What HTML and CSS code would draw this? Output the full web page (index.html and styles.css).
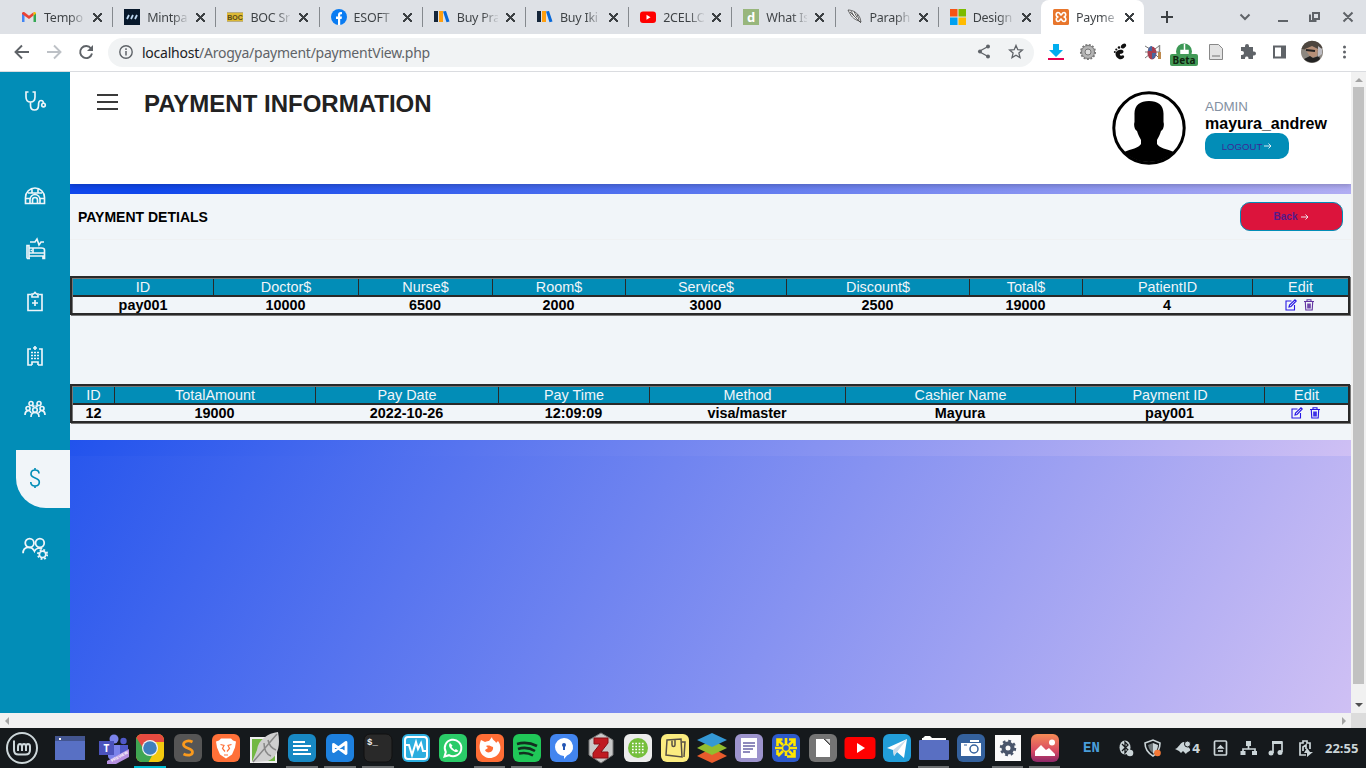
FILE: index.html
```html
<!DOCTYPE html>
<html lang="en">
<head>
<meta charset="utf-8">
<title>Payment</title>
<link rel="stylesheet" href="styles.css">
</head>
<body>
<div class="screen">
<div class="tabs">
  <div class="tab"><svg class="fav" viewBox="0 0 16 16"><path d="M1 13V4l2.500.500V13z" fill="#4285f4"/><path d="M12.500 13V4.500L15 4v9z" fill="#34a853"/><path d="M1 4.500C1 3 2.500 2.500 3.500 3.200L8 6.700v3.200L1 5z" fill="#ea4335"/><path d="M8 6.700l4.500-3.500L12.500 6.500 8 9.900z" fill="#ea4335"/><path d="M12.500 3.200C13.500 2.500 15 3 15 4.500L12.500 6.800z" fill="#fbbc04"/></svg><span class="name">Tempo</span><i class="close"></i></div>
  <div class="tab"><svg class="fav" viewBox="0 0 16 16"><path d="M0 0h16v16H0z" fill="#07182b"/><path d="M3 10l2-4M7 10l2-4M11 10l2-4" stroke="#bcd8f2" stroke-width="1.800"/></svg><span class="name">Mintpa</span><i class="close"></i></div>
  <div class="tab"><svg class="fav" viewBox="0 0 16 16"><path d="M0 3h16v10H0z" fill="#dcb936"/><path d="M0 3.500h16M0 12.500h16" stroke="#b9ad84"/><text x="8" y="10.500" class="fav-boc">BOC</text></svg><span class="name">BOC Sr</span><i class="close"></i></div>
  <div class="tab"><svg class="fav" viewBox="0 0 16 16"><circle cx="8" cy="8" r="8" fill="#0a7cf2"/><path d="M7 16v-6H5V7.500h2V6c0-2.200 1.300-3.200 4-2.800v2C9.500 5 9.200 5.400 9.200 6.500v1H11L10.600 10H9.200v6z" fill="#fff"/></svg><span class="name">ESOFT</span><i class="close"></i></div>
  <div class="tab"><svg class="fav" viewBox="0 0 16 16"><path d="M0 2h4v11H0z" fill="#15263a"/><path d="M5 2h4v11H5z" fill="#ff9f10"/><path d="M9 2.500L12 2l3.500 10.500-3 .8z" fill="#0868d8"/></svg><span class="name">Buy Pra</span><i class="close"></i></div>
  <div class="tab"><svg class="fav" viewBox="0 0 16 16"><path d="M0 2h4v11H0z" fill="#15263a"/><path d="M5 2h4v11H5z" fill="#ff9f10"/><path d="M9 2.500L12 2l3.500 10.500-3 .8z" fill="#0868d8"/></svg><span class="name">Buy Iki</span><i class="close"></i></div>
  <div class="tab"><svg class="fav" viewBox="0 0 16 16"><rect y="2.500" width="16" height="11.500" rx="3" fill="#f00"/><path d="M6.500 5.800v5l4-2.500z" fill="#fff"/></svg><span class="name">2CELLO</span><i class="close"></i></div>
  <div class="tab"><svg class="fav" viewBox="0 0 16 16"><path d="M0 0h16v16H0z" fill="#98b67c"/><text x="8" y="12.500" class="fav-d">d</text></svg><span class="name">What Is</span><i class="close"></i></div>
  <div class="tab"><svg class="fav" viewBox="0 0 16 16"><path d="M1 1c5 0 10 3 12 8l1 4-2-1C6 10 4 7 1 1zM3 3l11 11M4 2l3 5M7 2.500l3 6M10 5l2 6" fill="#f5f5f5" stroke="#444" stroke-width=".8"/></svg><span class="name">Paraph</span><i class="close"></i></div>
  <div class="tab last"><svg class="fav" viewBox="0 0 16 16"><path d="M0 0h7.500v7.500H0z" fill="#f65314"/><path d="M8.500 0H16v7.500H8.500z" fill="#7cbb00"/><path d="M0 8.500h7.500V16H0z" fill="#00a1f1"/><path d="M8.500 8.500H16V16H8.500z" fill="#ffbb00"/></svg><span class="name">Design</span><i class="close"></i></div>
  <div class="tab active"><svg class="fav" viewBox="0 0 16 16"><rect width="16" height="16" rx="1.500" fill="#e8762c"/><path d="M5.500 8C2.500 8 2.500 3.500 5 3.500S7 6 8 6s.8-2.500 3-2.500S13.500 8 10.500 8c3 0 3 4.500.500 4.500S9 10 8 10s-.8 2.500-3 2.500S2.500 8 5.500 8z" fill="none" stroke="#fff" stroke-width="1.600"/></svg><span class="name">Payme</span><i class="close"></i></div>
  <svg class="winctl" viewBox="0 0 221 34"><g fill="none" stroke="#3c4043" stroke-width="2"><path d="M17 17h12M23 11v12"/><path d="M96.500 14.500L101 19l4.500-4.500" stroke="#5f6368"/><g stroke="#5f6368"><path d="M134 21h10M169 13h6v6h-6zM166 14.500v6.500h6.500M199.500 12.500l9 9M208.500 12.500l-9 9"/></g></g></svg>
</div>
<div class="toolbar">
  <svg class="nav" viewBox="0 0 108 36"><g fill="none" stroke="#5f6368" stroke-width="1.900"><path d="M29 17H16M22 10.500L15.500 17l6.500 6.500"/><path d="M47 17h13M54 10.500l6.500 6.500-6.500 6.500" stroke="#bdc1c6"/><path d="M91 13.500A6 6 0 1 0 92 18.500"/></g><path d="M93 10v6h-6z" fill="#5f6368"/></svg>
  <div class="address"><svg class="info" viewBox="0 0 16 16"><circle cx="8" cy="8" r="6.200" fill="none" stroke="#5f6368" stroke-width="1.400"/><path d="M8 7v4.500M8 4.300V6" stroke="#5f6368" stroke-width="1.500"/></svg><span class="url"><b>localhost</b>/Arogya/payment/paymentView.php</span>
    <svg class="addr-icons" viewBox="0 0 60 30"><g fill="none" stroke="#5f6368" stroke-width="1.300"><path d="M14 9.500l-9 5 9 5"/><path d="M42 8.500l1.800 4.200 4.600.4-3.500 3 1.100 4.500-4-2.400-4 2.400 1.100-4.500-3.500-3 4.600-.4z"/></g><g fill="#5f6368"><circle cx="14" cy="9.500" r="2"/><circle cx="6" cy="14.500" r="2"/><circle cx="14" cy="19.500" r="2"/></g></svg>
  </div>
  <svg class="ext" viewBox="0 0 332 36">
    <path d="M19 9h6v6h4l-7 7-7-7h4z" fill="#00aeef"/><path d="M14 24h16" stroke="#e5004f" stroke-width="2"/>
    <circle cx="54" cy="17" r="6.500" fill="#b4b4b4" stroke="#777"/><circle cx="54" cy="17" r="7.300" fill="none" stroke="#777" stroke-width="1.500" stroke-dasharray="2 1.500"/><circle cx="54" cy="17" r="3" fill="#ddd" stroke="#777"/>
    <g fill="#111"><ellipse cx="89.500" cy="11" rx="3" ry="2" transform="rotate(-35 89.500 11)"/><circle cx="85" cy="12.500" r="1.300"/><circle cx="82.300" cy="14.500" r="1.100"/><circle cx="80.800" cy="17" r="1"/><path d="M81.500 19c0-4.500 8-5.500 8-2.500s-4.500 1.500-3.500 3.500 3-1 4 1-3 4-5 3-3.500-3-3.500-5z"/></g>
    <path d="M111 11l5 3M111 17h14M111 23l5-4M125 11l-4 3M125 23l-4-4" stroke="#777"/><ellipse cx="118" cy="18" rx="4.500" ry="6.500" fill="#a63e50"/><path d="M118 11a4 5 0 0 0-4 5h4z" fill="#4767a0"/><path d="M118 18h4a4 6 0 0 1-4 6z" fill="#4767a0"/><path d="M125.500 10v8" stroke="#888" stroke-width="1.500"/><path d="M125.500 17v7" stroke="#bd894d" stroke-width="3"/>
    <circle cx="150" cy="16.500" r="8" fill="#3c9856"/><path d="M147 15.500h7v4h-7zM150.500 9v6" stroke="#fff" stroke-width="1.500" fill="#fff"/><rect x="136" y="19" width="28" height="12" rx="2" fill="#439a57"/><text x="150" y="29" class="beta">Beta</text>
    <path d="M175.500 9.500h9l4 4v11h-13z" fill="#e3e3e3" stroke="#888"/><path d="M178 20h8v2h-8z" fill="#aaa"/>
    <path d="M207 12h4v-1a2 2 0 0 1 4 0v1h4v4.500h1a2 2 0 0 1 0 4h-1V24h-4.500v-1a1.800 1.800 0 0 0-3.500 0v1H207v-4h1a1.800 1.800 0 0 0 0-4h-1z" fill="#5f6368"/>
    <path d="M240 11.500h11v11h-11z" fill="none" stroke="#5f6368" stroke-width="2"/><path d="M247 11h5v12h-5z" fill="#5f6368"/>
    <circle cx="278" cy="17" r="11" fill="#8c8780"/><path d="M267.500 14a11 11 0 0 1 21-1l-5 3-8-1z" fill="#4d463f"/><path d="M271 14l7-3 6 3-1 7-6 2z" fill="#b58f78"/><path d="M270 24l6-3 3 2 6-2 1 3a11 11 0 0 1-16 0z" fill="#222"/><path d="M272 15l9 1" stroke="#222" stroke-width="2"/><path d="M284 11l4 3v5l-4 3z" fill="#bdbcc2"/>
    <g fill="#5f6368"><circle cx="310.500" cy="12" r="1.500"/><circle cx="310.500" cy="17" r="1.500"/><circle cx="310.500" cy="22" r="1.500"/></g>
  </svg>
</div>
<div class="viewport">
  <nav class="side">
    <svg class="logo" viewBox="0 0 24 24"><path d="M5.500 3H3v5c0 3 1.500 5 4.500 5S12 11 12 8V3H9.500M7.500 13v3.500c0 6 8 6 8 0 0-3 .5-5 2.500-5s2.500 1.500 2.500 3"/><circle cx="20.500" cy="16" r="1.800"/></svg>
    <svg viewBox="0 0 24 24"><path d="M2.500 19.500v-6a9.500 9.500 0 0 1 19 0v6zM2.500 14.500h4M17.500 14.500h4M5 9h14M9 9V4.500M15 9V4.500M7 19v-3.500a5 5 0 0 1 10 0V19M9.500 19v-3a2.500 2.500 0 0 1 5 0v3"/></svg>
    <svg viewBox="0 0 24 24"><path d="M4 21.500V8.500h2v13M4 21.500h3M6 19h14v2.500h1.500V13c0-1.500-1-2-3-2H6M6 16h15M10 11v5M7 5h5l2-3 2 6 2-3h3M7.500 13.500h1.500"/></svg>
    <svg viewBox="0 0 24 24"><path d="M8 4.500H5v16h14v-16h-3M9 4h1.500l1.500-1.500L13.500 4H15v3H9zM12 10v6M9 13h6"/></svg>
    <svg viewBox="0 0 24 24"><path d="M8 5H5v16h4M16 5h3v16h-4M9 21v-3h6v3M12 2v4M10 4h4"/><path d="M8 8.500h8M8 11.500h8M8 14.500h8" stroke-dasharray="2 1"/></svg>
    <svg viewBox="0 0 24 24"><circle cx="8" cy="6.500" r="2"/><circle cx="16" cy="6.500" r="2"/><circle cx="5" cy="11.500" r="2"/><circle cx="19" cy="11.500" r="2"/><circle cx="12" cy="13" r="2.300"/><path d="M2 18c0-5 5-6 6-2M16 16c1-4 6-3 6 2M8 20c0-6 8-6 8 0M9.500 10l2-1.500M14.500 10l-2-1.500"/></svg>
    <div class="current"><svg viewBox="0 0 24 24"><path d="M16 7.500C16 5 14.500 4 12 4S8 5.500 8 8c0 5 8.300 3 8.300 8 0 2.500-1.800 4-4.300 4s-4.200-1.500-4.200-4M12 2v2M12 20v2"/></svg></div>
    <svg class="users" viewBox="0 0 24 24"><circle cx="7" cy="6.500" r="4"/><circle cx="16.500" cy="6.500" r="4"/><path d="M1 16c0-7 8-7 10.500-2 1.500-3 5-3.500 7-2"/><circle cx="19" cy="17" r="3"/><circle cx="19" cy="17" r="4.300" stroke-dasharray="1.700 1.700" stroke-width="1.700"/></svg>
  </nav>
  <div class="page">
    <header class="head">
      <div class="burger"><i></i><i></i><i></i></div>
      <h1>PAYMENT INFORMATION</h1>
      <div class="user">
        <svg class="avatar" viewBox="0 0 74 74"><circle cx="37" cy="37" r="35.200" fill="#fff" stroke="#000" stroke-width="3"/><path d="M37 10c-9 0-15 4-14.500 14v7c-1 3 0 8 2.500 9 1 4 3 7 4 9v4c-2 4-10 5-17 8a36 36 0 0 0 50 0c-7-3-15-4-17-8v-4c1-2 3-5 4-9 2.500-1 3.500-6 2.500-9v-7C52 14 46 10 37 10z"/></svg>
        <div class="who"><small>ADMIN</small><strong>mayura_andrew</strong><a class="logout">LOGOUT<svg viewBox="0 0 8 8"><path d="M0 4h7M4.500 1.500L7 4 4.500 6.500"/></svg></a></div>
      </div>
    </header>
    <main>
      <section class="card">
        <div class="cardhead"><h2>PAYMENT DETIALS</h2><a class="back">Back<svg viewBox="0 0 8 8"><path d="M0 4h7M4.500 1.500L7 4 4.500 6.500"/></svg></a></div>
        <div class="tbl t1">
          <div class="row th"><span>ID</span><span>Doctor$</span><span>Nurse$</span><span>Room$</span><span>Service$</span><span>Discount$</span><span>Total$</span><span>PatientID</span><span>Edit</span></div>
          <div class="row td"><span>pay001</span><span>10000</span><span>6500</span><span>2000</span><span>3000</span><span>2500</span><span>19000</span><span>4</span><span class="acts"><svg viewBox="0 0 12 12"><path d="M6.500 2H1v9h8.500V6M4 8l.5-2L10 .8 11.300 2 6 7.500z"/></svg><svg class="visited" viewBox="0 0 12 12"><path d="M1 2.500h10M4 2V.8h4V2M2.300 3l.5 8h6.400l.5-8M4.800 4.500v5M6 4.500v5M7.200 4.500v5"/></svg></span></div>
        </div>
        <div class="tbl t2">
          <div class="row th"><span>ID</span><span>TotalAmount</span><span>Pay Date</span><span>Pay Time</span><span>Method</span><span>Cashier Name</span><span>Payment ID</span><span>Edit</span></div>
          <div class="row td"><span>12</span><span>19000</span><span>2022-10-26</span><span>12:09:09</span><span>visa/master</span><span>Mayura</span><span>pay001</span><span class="acts"><svg viewBox="0 0 12 12"><path d="M6.500 2H1v9h8.500V6M4 8l.5-2L10 .8 11.300 2 6 7.500z"/></svg><svg viewBox="0 0 12 12"><path d="M1 2.500h10M4 2V.8h4V2M2.300 3l.5 8h6.400l.5-8M4.800 4.500v5M6 4.500v5M7.200 4.500v5"/></svg></span></div>
        </div>
      </section>
    </main>
  </div>
  <div class="vscroll"><i class="up"></i><i class="thumb"></i><i class="down"></i></div>
</div>
<div class="hscroll"><i class="left"></i><i class="right"></i><b></b></div>
<footer class="taskbar">
  <div class="slot mint"><svg viewBox="0 0 32 32"><g fill="none" stroke="#cdd7da" stroke-width="2"><circle cx="16" cy="16" r="15"/><path d="M8 8.500V18c0 3 2 4.500 4.500 4.500h7c3 0 4.500-1.500 4.500-4.500v-3.500c0-3.500-4-3.500-4 0V19M20 15c0-4-4-4-4 0v4M16 15c0-4-4-4-4 0v4" stroke-width="2"/></g></svg></div>
  <div class="slot wins"><svg viewBox="0 0 32 32"><path d="M1 4h30v24H1z" fill="#5870c4"/><path d="M1 4h30v5H1z" fill="#43558f"/><path d="M5 6h2v2H5z" fill="#fff"/></svg></div>
  <div class="slot teams"><svg viewBox="0 0 32 32"><circle cx="16" cy="7" r="4.500" fill="#7b83eb"/><circle cx="25.500" cy="9" r="3.200" fill="#5059c9"/><path d="M20 13h10v9c0 5-8 7-10 2z" fill="#5059c9"/><path d="M10 13h12v11c-2 6-12 5-12 0z" fill="#7b83eb"/><path d="M1 9h15v14H1z" fill="#4b53bc"/><text x="8.500" y="20" class="ic-t">T</text><path d="M9 29l22-12v8l-13 7H9z" fill="#b490e0"/><text x="14" y="30" class="ic-prev" transform="rotate(-28 14 30)">PREVIEW</text></svg></div>
  <div class="slot run now"><svg viewBox="0 0 32 32"><clipPath id="tile"><rect x="2" y="2" width="28" height="28" rx="6"/></clipPath><g clip-path="url(#tile)"><path d="M2 2h28v28H2z" fill="#f2c90f"/><path d="M2 0h28v10H16l-6 10L2 7z" fill="#e64a40"/><path d="M2 5l10 16 7 1-5 9H2z" fill="#3fa652"/></g><circle cx="16" cy="16" r="8" fill="#f2f2f2"/><circle cx="16" cy="16" r="6.800" fill="#3f7fbd"/></svg></div>
  <div class="slot"><svg viewBox="0 0 32 32"><rect x="2" y="2" width="28" height="28" rx="6" fill="#555"/><path d="M20.500 10c-4-2-9-1-9 2.500 0 4.500 9 3 9 7.500 0 3.500-5 4-9 2" fill="none" stroke="#fb9a1c" stroke-width="2.700"/></svg></div>
  <div class="slot"><svg viewBox="0 0 32 32"><rect x="2" y="2" width="28" height="28" rx="6" fill="#ff7038"/><path d="M11 6.500h10l2 2 3 1-1 6-3 7-6 4-6-4-3-7-1-6 3-1z" fill="#fff"/><path d="M10.500 12.500l3.500 1-1.500 3 2.500 3M21.500 12.500l-3.500 1 1.500 3-2.500 3M14 23h4" fill="none" stroke="#ff7038" stroke-width="1.200"/></svg></div>
  <div class="slot"><svg viewBox="0 0 32 32"><path d="M3 6h25v24H3z" fill="#72b843" stroke="#eee" stroke-width="2"/><path d="M30 0C20 1 10 8 9 18L4 30l16-1c9-3 13-14 10-29z" fill="#cfcfcf"/><path d="M29 2L5 30M16 11c0 6 2 11 7 13M20 8c1 5 3 8 8 10" fill="none" stroke="#888" stroke-width="1.500"/></svg></div>
  <div class="slot run"><svg viewBox="0 0 32 32"><rect x="2" y="2" width="28" height="28" rx="6" fill="#1888c3"/><path d="M7 10h12M7 14h18M7 18h15M7 22h18" stroke="#fff" stroke-width="2"/></svg></div>
  <div class="slot run"><svg viewBox="0 0 32 32"><rect x="2" y="2" width="28" height="28" rx="6" fill="#1d80de"/><path d="M9.500 12.500L22 21.500v-11L9.500 19.500z" fill="none" stroke="#fff" stroke-width="2.800" stroke-linejoin="round"/></svg></div>
  <div class="slot run"><svg viewBox="0 0 32 32"><rect x="2" y="2" width="28" height="28" rx="6" fill="#292929" stroke="#111"/><text x="5" y="13" class="ic-sh">$_</text></svg></div>
  <div class="slot n"><svg viewBox="0 0 32 32"><rect x="2" y="2" width="28" height="28" rx="6" fill="#2caedf"/><rect x="5" y="5" width="22" height="22" rx="3" fill="none" stroke="#fff" stroke-width="2"/><path d="M5 13h4l3 10 4-13 2 7 3-6 2 8h4" fill="none" stroke="#fff" stroke-width="2"/></svg></div>
  <div class="slot n"><svg viewBox="0 0 32 32"><rect x="2" y="2" width="28" height="28" rx="6" fill="#2acb68"/><path d="M7.500 24.500l1.300-4.500a8.300 8.300 0 1 1 3.200 3.200z" fill="none" stroke="#fff" stroke-width="2"/><path d="M13 11c-2 2-.5 5 2 7s5 3 6.500 1l-2.500-2-1.500 1-3-3 1-1.500z" fill="#fff"/></svg></div>
  <div class="slot n run"><svg viewBox="0 0 32 32"><rect x="2" y="2" width="28" height="28" rx="6" fill="#ff6d35"/><path d="M7 8l4 2c2-1 3-1 4-1l3-4c0 3 4 4 4 6l2-2c6 8 0 17-8 17S3 18 7 8z" fill="#fff"/><path d="M12 14c3-1 4 0 7 1 1 6-7 7-8 3l3-2z" fill="#ff6d35"/></svg></div>
  <div class="slot n run"><svg viewBox="0 0 32 32"><rect x="2" y="2" width="28" height="28" rx="6" fill="#20c758"/><path d="M6 12c7-2 14-1 20 2M7 17c6-2 12-1 17 2M8 21.500c5-1 9-1 14 2" fill="none" stroke="#132f20" stroke-width="2.600"/></svg></div>
  <div class="slot n"><svg viewBox="0 0 32 32"><rect x="2" y="2" width="28" height="28" rx="6" fill="#4285ef"/><path d="M16 6a9 9 0 0 1 3 17.500L16 27v-3A9 9 0 0 1 16 6z" fill="#fff"/><circle cx="16" cy="13" r="2" fill="#2456b4"/><path d="M15 14h2v4h-2z" fill="#2456b4"/></svg></div>
  <div class="slot n"><svg viewBox="0 0 32 32"><path d="M16 1l12 7v15l-12 8-12-8V8z" fill="#c9c9c9" stroke="#777"/><path d="M9 6h14v5l-7 9h7v6H8v-5l7-9H9z" fill="#c01b22" stroke="#881116"/></svg></div>
  <div class="slot n"><svg viewBox="0 0 32 32"><rect x="2" y="2" width="28" height="28" rx="6" fill="#ececec"/><circle cx="16" cy="16" r="10" fill="#75bf3c"/><path d="M10 11.500h12M10 14.500h12M10 17.500h12M10 20.500h12" stroke="#fff" stroke-width="1.700" stroke-dasharray="1.700 1.600"/></svg></div>
  <div class="slot n"><svg viewBox="0 0 32 32"><rect x="2" y="2" width="28" height="28" rx="6" fill="#fbec80"/><path d="M8 8l14-1 1 18-16-2zM13 8v5c0 2 3 2 3 0V7M23 10h3l-1 15" fill="none" stroke="#575044" stroke-width="1.500"/></svg></div>
  <div class="slot n"><svg viewBox="0 0 32 32"><path d="M1 24l15-8 15 8-15 7z" fill="#e85b2c"/><path d="M1 16l15-8 15 8-15 7z" fill="#91bd2f"/><path d="M1 8l15-7 15 7-15 7z" fill="#3498d5"/></svg></div>
  <div class="slot n"><svg viewBox="0 0 32 32"><rect x="2" y="2" width="28" height="28" rx="6" fill="#9d94cd"/><path d="M8 6h16v20H8z" fill="#fff"/><path d="M10 11h12M10 14h12M10 17h10M10 20h7" stroke="#6964a6" stroke-width="1.300"/></svg></div>
  <div class="slot n"><svg viewBox="0 0 32 32"><rect x="2" y="2" width="28" height="28" rx="6" fill="#2d5acb"/><path d="M8 8l5 5M24 8l-5 5M13 19l-5 5M19 19l5 5M7.500 14V7.500h5M19 7.500h5.500V14M7.500 18v5M17 24.500h7.500V18M5 16h7M20 16h7M16 6v6M16 20v4" fill="none" stroke="#ffe500" stroke-width="2.600"/><circle cx="16" cy="16" r="3.500" fill="#2d5acb" stroke="#ffe500" stroke-width="1.500"/></svg></div>
  <div class="slot n"><svg viewBox="0 0 32 32"><rect x="2" y="2" width="28" height="28" rx="6" fill="#747474"/><path d="M9 7h8l6 6v12H9z" fill="#fff"/><path d="M17 7l6 6" stroke="#444"/><path d="M18.500 7H23v4.500z" fill="#ddd"/></svg></div>
  <div class="slot n"><svg viewBox="0 0 32 32"><rect x=".5" y="5" width="31" height="22" rx="4" fill="#f00"/><path d="M13 11v10l8-5z" fill="#fff"/></svg></div>
  <div class="slot n"><svg viewBox="0 0 32 32"><rect x="2" y="2" width="28" height="28" rx="6" fill="#229ed9"/><path d="M6 16L26 7l-3 19-7-6-3 4-1-6z" fill="#fff"/><path d="M12 18L26 7 16 20l-3 4z" fill="#c8dcea"/></svg></div>
  <div class="slot n run"><svg viewBox="0 0 32 32"><path d="M4 12V6h1l2-2h5l2 2h14v7z" fill="#fff"/><rect x="1" y="8" width="30" height="20" rx="1" fill="#596fc2"/></svg></div>
  <div class="slot n"><svg viewBox="0 0 32 32"><rect x="2" y="2" width="28" height="28" rx="6" fill="#34619d"/><path d="M6 11h20v13H6zM15 8h9v2h-9z" fill="#fff"/><circle cx="19" cy="17" r="4" fill="#fff" stroke="#34619d" stroke-width="1.500"/><path d="M9 13h3" stroke="#34619d"/></svg></div>
  <div class="slot n run"><svg viewBox="0 0 32 32"><path d="M3 3h26v26H3z" fill="#fafafa"/><circle cx="16" cy="16" r="4.500" fill="none" stroke="#49556a" stroke-width="4"/><circle cx="16" cy="16" r="7" fill="none" stroke="#49556a" stroke-width="2.500" stroke-dasharray="2.750"/></svg></div>
  <div class="slot n run"><svg viewBox="0 0 32 32"><defs><linearGradient id="photo" x2="0" y2="1"><stop stop-color="#f58b55"/><stop offset=".6" stop-color="#d84a64"/><stop offset="1" stop-color="#8c2768"/></linearGradient></defs><rect x="2" y="2" width="28" height="28" rx="6" fill="url(#photo)"/><path d="M6 24v-5l6-6 5 5 3-2 6 6v2z" fill="#fff"/><circle cx="23" cy="10.500" r="3" fill="#fff"/></svg></div>
  <span class="lang">EN</span>
  <svg class="tray" viewBox="0 0 206 24"><g fill="#cbd5d8" stroke="none"><ellipse cx="8" cy="11.500" rx="5.500" ry="7"/><path d="M5 8l6 6-3 3V6l3 3-6 6" fill="none" stroke="#15191c" stroke-width="1.300"/><circle cx="13" cy="17" r="3.300"/>
    <path d="M28 7l8-3 7 3c0 6-2 10-7 13-5-3-8-7-8-13z" fill="#15191c" stroke="#cbd5d8" stroke-width="1.600"/><path d="M36 7l5 2c0 4-2 7-5 9z" /><path d="M31 9l5-2v10c-3-2-4-4-5-8z" fill="#6d7679"/><circle cx="40.500" cy="17" r="3.300" fill="#f57937"/>
    <path d="M58 13c4-1 5-7 9-7l6 7c1 3-3 2-4 5l-3-3-2 2-2-2z"/><circle cx="70.500" cy="8" r="3" stroke="#15191c"/></g><text x="75" y="17" class="num">4</text>
    <g fill="none" stroke="#cbd5d8" stroke-width="1.700"><rect x="97.500" y="5" width="12" height="14" rx="1"/><path d="M101 15h5"/><path d="M101.500 12l2-2 2 2z"/><path d="M131.500 9v4M126 17v-4h12v4"/><path d="M156 17V6h9v10"/><path d="M189 19h-6V7h3V5h4v2h3v6M186 15v-4l3-2v4"/></g><g fill="#cbd5d8"><path d="M129 5h5v5h-5zM123.500 15h5v4h-5zM135 15h5v4h-5zM155 5h10v3h-10z"/><circle cx="154" cy="17" r="2.500"/><circle cx="163" cy="16.500" r="2.500"/><path d="M190 12l-3 5h3v4l6-5h-3z"/></g></svg>
  <span class="clock">22:55</span>
</footer>
</div>
</body>
</html>
```
FILE: styles.css
```css
* { box-sizing: border-box; }
body { margin: 0; font-family: "Liberation Sans", Arial, sans-serif; color: #000; }
svg { display: block; flex: none; }
.screen { width: 1366px; height: 768px; overflow: hidden; display: flex; flex-direction: column; }

/* browser chrome */
.tabs { height: 34px; flex: none; display: flex; background: #dee1e6; padding-left: 9px; }
.tab { width: 103.2px; flex: none; display: flex; align-items: center; padding-left: 12px; position: relative; }
.tab::after { content: ""; position: absolute; right: -1px; top: 7px; width: 1px; height: 20px; background: #85898e; }
.tab.last::after, .tab.active::after { display: none; }
.tab.active { background: #fff; border-radius: 8px 8px 0 0; }
.fav { width: 16px; height: 16px; }
.fav-boc { font: bold 7px "Liberation Sans", sans-serif; fill: #5b4a1a; text-anchor: middle; }
.fav-d { font: bold 13px "Noto Sans", sans-serif; fill: #fff; text-anchor: middle; }
.name { width: 41px; margin-left: 7px; white-space: nowrap; font: 12.500px "Noto Sans", sans-serif; letter-spacing: -.25px; color: transparent; background: linear-gradient(90deg, #3c4043 62%, #c9ccd1 98%) text; }
.close { width: 9px; height: 9px; margin-left: 8px; background: linear-gradient(45deg, transparent 43%, #3c4043 43%, #3c4043 57%, transparent 57%), linear-gradient(-45deg, transparent 43%, #3c4043 43%, #3c4043 57%, transparent 57%); }
.winctl { width: 221px; height: 34px; }
.toolbar { height: 38px; flex: none; display: flex; align-items: center; background: #fff; border-bottom: 1px solid #dadce0; }
.nav { width: 108px; height: 36px; }
.address { width: 926px; height: 29px; margin-top: -1px; border-radius: 15px; background: #f1f3f4; display: flex; align-items: center; padding-left: 10px; }
.info { width: 16px; height: 16px; }
.url { margin-left: 8px; flex: 1; font: 14px "Noto Sans", sans-serif; letter-spacing: -.24px; color: #5f6368; white-space: nowrap; }
.url b { font-weight: 400; color: #202124; }
.addr-icons { width: 60px; height: 30px; }
.ext { width: 332px; height: 36px; }
.beta { font: bold 10px "Noto Sans", sans-serif; text-anchor: middle; fill: #10240f; }

/* web page */
.viewport { height: 641px; flex: none; display: flex; }
.side { width: 70px; flex: none; background: #028db7; display: flex; flex-direction: column; align-items: center; padding-top: 17px; }
.side svg { width: 24px; height: 24px; margin-bottom: 29.200px; fill: none; stroke: #eef5f9; stroke-width: 1.650; }
.side .logo { margin-bottom: 71px; }
.current { width: 54px; height: 58px; align-self: flex-end; background: #f1f5f9; border-bottom-left-radius: 30px; padding: 16px 0 0 7px; }
.side .current svg { stroke: #028db7; }
.side .users { margin-top: 28px; width: 26px; height: 26px; }
.page { width: 1281px; flex: none; background: linear-gradient(120deg, #0f47ec 0%, #cfc0f4 100%); }
.head { height: 112px; background: #fff; display: flex; padding: 19px 24px 0 27px; position: relative; box-shadow: 0 2px 5px rgba(0,0,0,.2); clip-path: inset(0 0 -10px 0); }
.burger { width: 21px; height: 16px; margin-top: 3px; display: flex; flex-direction: column; justify-content: space-between; }
.burger i { height: 2px; background: #3a3a3a; }
h1 { margin: -1px 0 0 26px; font-size: 24px; line-height: 28px; color: #222; }
.user { margin-left: auto; display: flex; gap: 19px; }
.avatar { width: 74px; height: 74px; margin-top: -.5px; }
.who { width: 122px; padding-top: 7px; display: flex; flex-direction: column; }
.who small { font-size: 13.330px; line-height: 18px; color: #8390a2; }
.who strong { font-size: 16px; line-height: 16px; height: 17px; white-space: nowrap; }
.logout { width: 84px; height: 26px; border-radius: 10px; background: #028db7; color: #3b2a96; font-size: 9.600px; display: flex; align-items: center; justify-content: center; gap: 2px; }
.logout svg, .back svg { width: 8px; height: 8px; fill: none; stroke: #eef5f9; stroke-width: .900; }
main { padding-top: 10px; height: 272px; background: linear-gradient(130deg, #0f47ec 5%, #cfc0f4 100%); }
.card { height: 246px; background: #f1f5f9; }
.cardhead { height: 46px; border-bottom: 1px solid #eff1f3; display: flex; justify-content: space-between; padding: 8px 8px 0; }
h2 { margin: 7px 0 0; font-size: 14px; line-height: 16px; }
.back { width: 103px; height: 29px; border: 1px solid #028db7; border-radius: 10px; background: #dc143c; color: #551a8b; font-size: 10px; font-weight: bold; display: flex; align-items: center; justify-content: center; gap: 4px; }
.tbl { height: 39px; margin: 36px 1px 0 0; border: 2px solid #292929; box-shadow: inset 1px 1px #777, 1px 1px #777; padding: 1px 0 0 1px; font-size: 14.400px; }
.tbl.t2 { margin-top: 69px; }
.row { display: grid; text-align: center; line-height: 16px; }
.t1 .row { grid-template-columns: 140px 145px 134px 133px 161px 183px 113px 170px 1fr; }
.t2 .row { grid-template-columns: 41px 201px 183px 151px 196px 230px 189px 1fr; }
.th { height: 16px; background: #028db7; color: #f1f5f9; }
.th span + span { border-left: 1px solid #292929; }
.td { height: 18px; border-top: 2px solid #292929; font-weight: bold; }
.acts { display: flex; justify-content: center; gap: 6px; padding-top: 2px; }
.acts svg { width: 12px; height: 12px; fill: none; stroke: #2718e5; stroke-width: 1.100; }
.acts .visited { stroke: #6133a0; }
.vscroll { width: 15px; background: #f1f1f1; display: flex; flex-direction: column; align-items: center; }
.up { border: 4px solid transparent; border-top: 0; border-bottom-color: #a3a3a3; margin: 6px 0 5px; }
.thumb { width: 11px; height: 597px; background: #c1c1c1; }
.down { border: 4px solid transparent; border-bottom: 0; border-top-color: #505050; margin-top: 19px; }
.hscroll { height: 15px; flex: none; background: #f1f1f1; display: flex; align-items: center; padding-left: 5px; }
.left { border: 4px solid transparent; border-left: 0; border-right-color: #a3a3a3; }
.right { border: 4px solid transparent; border-right: 0; border-left-color: #a3a3a3; margin: 0 5px 0 auto; }
.hscroll b { width: 15px; height: 15px; background: #dcdcdc; }

/* desktop panel */
.taskbar { height: 40px; flex: none; background: #15191c; display: flex; }
.slot { width: 38px; flex: none; display: flex; justify-content: center; padding-top: 4px; overflow: hidden; }
.slot svg { width: 32px; height: 32px; }
.slot.n { width: 37px; }
.slot.mint { width: 44px; }
.slot.wins { width: 52px; }
.slot.teams { width: 35px; }
.slot.run { box-shadow: inset 0 -2px #6c6f71; border: solid #15191c; border-width: 0 3px; }
.slot.now { box-shadow: inset 0 -2px #00bcd4; }
.ic-t { font: bold 10px "Noto Sans", sans-serif; fill: #fff; text-anchor: middle; }
.ic-prev { font: bold 4px "Liberation Sans", sans-serif; fill: #fff; }
.ic-sh { font: bold 9px "Liberation Mono", monospace; fill: #eee; }
.lang { margin-left: 20px; width: 34px; font: bold 14px/40px "Liberation Mono", monospace; color: #4a9eda; }
.tray { width: 206px; height: 24px; margin-top: 8px; }
.num { font: bold 12px "DejaVu Sans", sans-serif; fill: #cbd5d8; }
.clock { margin-left: 2px; font: bold 13px/40px "Noto Sans", sans-serif; color: #cbd5d8; }
```
